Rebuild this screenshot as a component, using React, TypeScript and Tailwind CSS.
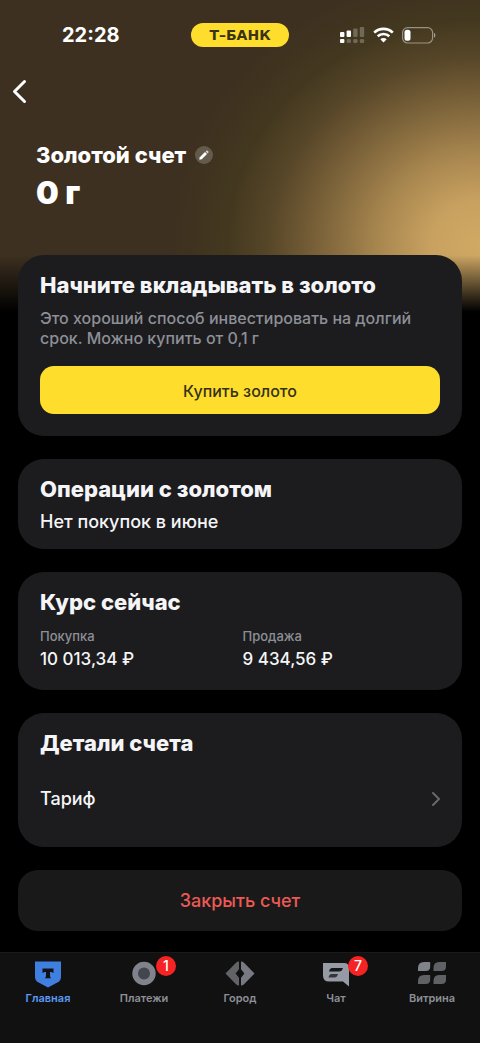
import React from "react";
import { ChevronRight } from "lucide-react";

const Card = ({ children, className = "" }: any) => (
  <section className={`bg-[#1c1c1e] rounded-[26px] px-[22px] ${className}`}>{children}</section>
);

const CardTitle = ({ children }: any) => (
  <h2 className="text-[22px] leading-7 font-extrabold text-[#f5f5f8]">{children}</h2>
);

const StatusBar = () => (
  <div className="h-[70px] grid grid-cols-3 items-center">
    <div className="pl-[62px] text-[20px] leading-6 font-bold">22:28</div>
    <div className="mx-auto w-[98px] h-6 rounded-full bg-[#ffdd2d] flex items-center justify-center font-['DejaVu_Sans',sans-serif] text-[14px] leading-4 font-bold text-[#3a3314] whitespace-nowrap">
      Т–БАНК
    </div>
    <div className="flex items-center justify-end gap-2 pr-11">
      <svg width="25" height="18" viewBox="0 0 25 18" fill="#fff">
        <rect x="0" y="6" width="4.4" height="5" rx="1" />
        <rect x="6.6" y="4.5" width="4.4" height="6.5" rx="1" />
        <g opacity=".25">
          <rect x="13.2" y="2.5" width="4.4" height="8.5" rx="1" />
          <rect x="19.8" y="1" width="4.4" height="10" rx="1" />
          <rect x="6.6" y="13" width="4.4" height="4" rx="1.5" />
          <rect x="13.2" y="13" width="4.4" height="4" rx="1.5" />
          <rect x="19.8" y="13" width="4.4" height="4" rx="1.5" />
        </g>
        <rect x="0" y="13" width="4.4" height="4" rx="1" />
      </svg>
      <svg width="21" height="16" viewBox="0 0 21 16" fill="none" stroke="#fff" strokeWidth="2.6">
        <path d="M1.2 5.6a13.4 13.4 0 0 1 18.6 0" />
        <path d="M4.7 9.3a8.4 8.4 0 0 1 11.6 0" />
        <path d="M7.3 12.2a4.6 4.6 0 0 1 6.4 0L10.5 15.5z" fill="#fff" stroke="none" />
      </svg>
      <svg width="34" height="17" viewBox="0 0 34 17">
        <rect x=".6" y=".6" width="30" height="15.4" rx="5" fill="none" stroke="#fff" strokeOpacity=".45" strokeWidth="1.2" />
        <rect x="2.5" y="2.8" width="6" height="11" rx="2.5" fill="#fff" />
        <path d="M32 5.8c1.8.7 1.8 4.3 0 5z" fill="#fff" fillOpacity=".5" />
      </svg>
    </div>
  </div>
);

const HomeIcon = () => (
  <svg width="28" height="28" viewBox="0 0 28 28">
    <path d="M1 1.5h26v15.2c0 2.4-1 4.300-3.200 5.600L14 27.500l-9.800-5.200C2 21 1 19.100 1 16.700z" fill="#3f7fe0" />
    <path d="M8.500 8.500h11v4.600c-.8-.8-2-1.200-3.500-1.200v3.300c0 1.400.4 2.300 1.200 3h-6.400c.8-.7 1.200-1.600 1.200-3v-3.300c-1.500 0-2.700.4-3.500 1.200z" fill="#101216" />
  </svg>
);

const PaymentsIcon = () => (
  <svg width="28" height="28" viewBox="0 0 28 28">
    <circle cx="14" cy="13.500" r="11.700" fill="#80838c" />
    <circle cx="14" cy="13.500" r="6" fill="#43464e" />
  </svg>
);

const CityIcon = () => (
  <svg width="30" height="28" viewBox="0 0 30 28">
    <path d="M14 1.500v7.700L10.600 13.500 14 17.800v7.700q-1.800 0-3-1.300L.5 13.500 11 2.800Q12.200 1.500 14 1.500z" fill="#626366" />
    <path d="M16 1.500v7.700l3.400 4.300L16 17.800v7.700q1.800 0 3-1.300l10.500-10.700L19 2.800Q17.800 1.500 16 1.500z" fill="#777a83" />
  </svg>
);

const ChatIcon = () => (
  <svg width="28" height="28" viewBox="0 0 28 28">
    <path d="M1 3h21q5 0 5 5v18.500l-6-5H7q-6 0-6-6z" fill="#969aa4" />
    <path d="M10 8h11q-1 3.500-4 3.500H7Q7.800 8 10 8z" fill="#14161a" />
    <path d="M9.500 14H16q-1 3.500-3.500 3.500H6.500Q7.300 14 9.500 14z" fill="#34363b" />
  </svg>
);

const ShowcaseIcon = () => (
  <svg width="30" height="28" viewBox="0 0 30 28" fill="#606164">
    <path d="M7 2h6.200v4.500Q13.200 11 8.700 11H1V8q0-6 6-6z" fill="#80838c" />
    <path d="M22 2h7v4.500q0 4.500-4.500 4.500H16.500V8q0-6 5.500-6z" />
    <path d="M7 15h6.200v4.500q0 4.500-4.500 4.500H1v-3q0-6 6-6z" />
    <path d="M22 15h7v4.500q0 4.500-4.500 4.500H16.500v-3q0-6 5.500-6z" />
  </svg>
);

const tabs = [
  { label: "Главная", icon: <HomeIcon />, active: true },
  { label: "Платежи", icon: <PaymentsIcon />, badge: 1 },
  { label: "Город", icon: <CityIcon /> },
  { label: "Чат", icon: <ChatIcon />, badge: 7 },
  { label: "Витрина", icon: <ShowcaseIcon /> },
];

const rates = [
  { label: "Покупка", value: "10 013,34 ₽" },
  { label: "Продажа", value: "9 434,56 ₽" },
];

export default function App() {
  return (
    <div className="min-h-screen flex flex-col bg-black bg-[linear-gradient(to_bottom,transparent_255px,black_312px),radial-gradient(ellipse_275px_245px_at_100%_245px,#d0a964_0%,#c8a160_18%,#a6854e_38%,#7c633a_58%,#584729_76%,#43381f_92%,#3d3020_112%)] text-white font-['Inter',sans-serif]">
      <StatusBar />

      <header className="h-[185px]">
        <button aria-label="Назад" className="block pl-3 pt-2">
          <svg width="15" height="27" viewBox="0 0 15 27" fill="none" stroke="#fff" strokeWidth="3" strokeLinecap="round" strokeLinejoin="round">
            <path d="M12.500 3.500L2.500 13.500l10 10" />
          </svg>
        </button>
        <div className="pl-9 pt-9">
          <div className="flex items-center gap-[9px]">
            <h1 className="text-[22px] leading-7 font-extrabold">Золотой счет</h1>
            <button aria-label="Переименовать счет" className="size-[18px] rounded-full bg-white/20 flex items-center justify-center">
              <svg width="12" height="12" viewBox="0 0 12 12" fill="#fff">
                <path d="M1.300 10.700l.5-2.500 5.200-5.100 2 2-5.200 5.100z" />
                <path d="M7.700 2.500l.7-.7q.6-.5 1.200 0l.7.7q.5.6 0 1.200l-.7.7z" opacity=".75" />
              </svg>
            </button>
          </div>
          <p className="text-[32px] leading-10 pt-1 font-black">0 г</p>
        </div>
      </header>

      <main className="px-[18px] pb-[21px] flex flex-col gap-[23px]">
        <Card className="pt-4 pb-[22px]">
          <CardTitle>Начните вкладывать в золото</CardTitle>
          <p className="pt-[9px] text-[16px] leading-5 font-medium text-[#8d8f96]">
            Это хороший способ инвестировать на долгий срок. Можно купить от 0,1 г
          </p>
          <button className="mt-[18px] pt-0.5 w-full h-12 rounded-[14px] bg-[#ffdd2d] text-[16px] font-medium text-[#333018]">
            Купить золото
          </button>
        </Card>

        <Card className="pt-4 pb-4">
          <CardTitle>Операции с золотом</CardTitle>
          <p className="pt-2 text-[18px] leading-[22px] font-medium text-[#f5f5f8]">Нет покупок в июне</p>
        </Card>

        <Card className="pt-4 pb-5">
          <CardTitle>Курс сейчас</CardTitle>
          <dl className="pt-2 grid grid-cols-2 gap-x-[5px]">
            {rates.map((rate) => (
              <div key={rate.label}>
                <dt className="text-[13px] leading-6 font-medium text-[#8d8f96]">{rate.label}</dt>
                <dd className="text-[17px] leading-[22px] font-medium text-[#f5f5f8]">{rate.value}</dd>
              </div>
            ))}
          </dl>
        </Card>

        <Card className="pt-4 pb-[33px]">
          <CardTitle>Детали счета</CardTitle>
          <button className="mt-[25px] w-full h-8 flex items-center justify-between text-[18px] font-medium text-[#f5f5f8]">
            Тариф
            <ChevronRight size={24} strokeWidth={2} className="-mr-2 mt-0.5 text-[#68686c]" />
          </button>
        </Card>

        <button className="h-[61px] rounded-[20px] bg-[#191919] text-[18px] font-medium text-[#ec5a55]">
          Закрыть счет
        </button>
      </main>

      <nav className="mt-auto h-[91px] border-t border-[#1a1a1a] bg-[#111] grid grid-cols-5 items-start">
        {tabs.map((tab) => (
          <a
            key={tab.label}
            href="#"
            className={`pt-[7px] flex flex-col items-center gap-0.5 text-[11px] leading-4 font-semibold ${tab.active ? "text-[#5b9af5]" : "text-[#8d8f96]"}`}
          >
            <span className="relative h-7">
              {tab.icon}
              {tab.badge && (
                <span className="absolute -top-1 left-[26px] size-5 rounded-full bg-[#f52323] text-white text-[14px] leading-5 font-medium text-center">
                  {tab.badge}
                </span>
              )}
            </span>
            {tab.label}
          </a>
        ))}
      </nav>
    </div>
  );
}
